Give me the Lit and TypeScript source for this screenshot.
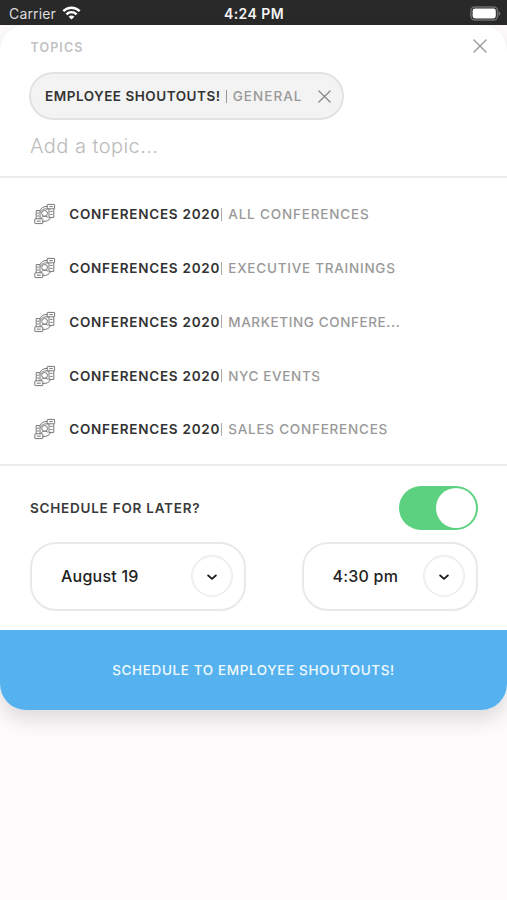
import { LitElement, html, css, svg } from "lit";
import { customElement, property } from "lit/decorators.js";

@customElement("close-icon")
class CloseIcon extends LitElement {
  static styles = css`
    :host { display: block; color: #999; }
    svg { display: block; width: 100%; height: 100%; }
  `;
  render() {
    return html`<svg viewBox="0 0 14 14" fill="none" stroke="currentColor" stroke-width="1.4" stroke-linecap="round"><path d="M1 1L13 13M13 1L1 13" /></svg>`;
  }
}

@customElement("status-bar")
class StatusBar extends LitElement {
  static styles = css`
    :host {
      display: grid; grid-template-columns: 1fr auto 1fr; align-items: center;
      box-sizing: border-box; height: 25px; padding: 2px 6px 0 9px;
      background: #292929; font-size: 14px; line-height: 22px;
    }
    .left { display: flex; align-items: center; gap: 6px; }
    .carrier { letter-spacing: 0.15px; color: #ddd; }
    .time { font-weight: 600; letter-spacing: 0.45px; color: #f4f4f4; margin-right: 2px; }
    .wifi { margin-top: -2px; }
    .battery { justify-self: end; margin-top: -1px; }
    svg { display: block; }
  `;
  render() {
    return html`
      <div class="left">
        <span class="carrier">Carrier</span>
        <svg class="wifi" width="19" height="14" viewBox="0 0 19 14" fill="none" stroke="#fff" stroke-width="2.4">
          <path d="M1.3 5.2C6 0.6 13 0.6 17.7 5.2" />
          <path d="M4.4 8.4C7.4 5.6 11.6 5.6 14.6 8.4" />
          <path d="M9.5 13.6L6.6 10.7C8.3 9.2 10.7 9.2 12.4 10.7Z" fill="#fff" stroke="none" />
        </svg>
      </div>
      <span class="time">4:24 PM</span>
      <svg class="battery" width="31" height="15" viewBox="0 0 31 15">
        <rect x="0.9" y="0.9" width="26.6" height="13.2" rx="4" fill="none" stroke="#6e6e6e" stroke-width="1.5" />
        <rect x="2.6" y="2.6" width="23.2" height="9.8" rx="2.4" fill="#fff" />
        <path d="M28.6 5.2C30.8 6 30.8 9 28.6 9.8Z" fill="#777" />
      </svg>
    `;
  }
}

const conferenceIcon = svg`
  <rect x="13.2" y="1.4" width="7.4" height="4.4" rx="0.5" />
  <path d="M15 5.8V14.4H19.8V5.8M16.2 8.4H18.6M16.2 11.4H18.6M15.4 3.6H18.8" />
  <rect x="0.8" y="15.8" width="8" height="4.8" rx="0.5" />
  <path d="M2.2 15.8V7.6H6V15.8M3.2 10.2H5M3.2 13H5M2.8 18.2H6.8" />
  <circle cx="10.6" cy="10.4" r="2.9" />
  <path d="M7 15.4C7.4 13.8 8.8 13.3 10.6 13.3S13.6 13.8 14.4 14.8" />
  <path d="M6 7.6C7.2 4.8 9.8 3.2 13.2 3.4M6.2 9.6C7.8 6.4 10.8 5.2 14.4 6.2M8.8 18.4C12.4 18.8 15.4 17.4 16.8 14.4" />
`;

@customElement("topic-row")
class TopicRow extends LitElement {
  @property() topic = "";
  @property() channel = "";
  @property({ type: Number }) tracking = 1;
  static styles = css`
    :host { display: flex; align-items: center; height: 53.75px; padding-left: 34px; font-size: 13.5px; white-space: pre; }
    svg { width: 22px; height: 22px; margin-right: 13.3px; flex: none; }
    .topic { color: #333; font-weight: 600; letter-spacing: 0.75px; }
    .bar { width: 1px; height: 13px; background: #aaa; margin: 0 6.5px 0 0.6px; }
    .channel { color: #999; font-weight: 500; }
  `;
  render() {
    return html`
      <svg viewBox="0 0 22 22" fill="none" stroke="#757575" stroke-width="1">${conferenceIcon}</svg>
      <span class="topic">${this.topic}</span><span class="bar"></span><span class="channel" style="letter-spacing:${this.tracking}px">${this.channel}</span>
    `;
  }
}

@customElement("picker-field")
class PickerField extends LitElement {
  @property() value = "";
  static styles = css`
    :host {
      display: flex; align-items: center; justify-content: space-between; box-sizing: border-box;
      height: 69px; padding: 0 11px 0 29px; border: 2px solid #e9e9e9; border-radius: 26px;
      font-size: 16px; font-weight: 500; color: #222; letter-spacing: 0.22px;
    }
    .value { margin-top: -2px; }
    .knob {
      display: grid; place-items: center; box-sizing: border-box; width: 42px; height: 42px; margin-top: -1px;
      border: 2px solid #efefef; border-radius: 50%;
    }
    svg { margin-top: 2px; }
  `;
  render() {
    return html`<span class="value">${this.value}</span>
      <span class="knob"><svg width="10" height="7" viewBox="0 0 10 7" fill="none" stroke="#222" stroke-width="1.9" stroke-linecap="round" stroke-linejoin="round"><path d="M1.2 1.5L5 4.9L8.8 1.5" /></svg></span>`;
  }
}

@customElement("app-root")
class AppRoot extends LitElement {
  static styles = css`
    :host { display: flex; flex-direction: column; height: 900px; overflow: hidden; background: #fdfbfc; font-family: Inter, "Liberation Sans", sans-serif; }
    .card { background: #fff; border-radius: 26px; overflow: hidden; box-shadow: 0 10px 20px rgba(50, 40, 45, 0.15); }
    .header { display: flex; justify-content: space-between; align-items: center; height: 43px; padding: 0 20px 0 30.5px; }
    .label { font-size: 12.5px; font-weight: 600; letter-spacing: 1.1px; color: #c2c2c2; margin-top: 1px; }
    .header close-icon { width: 14px; height: 14px; margin-bottom: 2px; }
    .chip {
      display: flex; align-items: center; box-sizing: border-box; width: 315px; height: 48px; margin: 4px 0 0 29px; padding-left: 14px;
      border: 2px solid #e2e2e2; border-radius: 24px; background: #f3f3f3; font-size: 13.5px;
    }
    .name { font-weight: 600; color: #333; letter-spacing: 0.52px; }
    .bar { width: 1px; height: 13px; background: #999; margin: 0 5.5px; }
    .sub { color: #999; font-weight: 500; letter-spacing: 1.05px; }
    .chip close-icon { width: 13px; height: 13px; margin-left: 15px; color: #888; }
    .placeholder { height: 56px; box-sizing: border-box; padding: 14px 0 0 30px; font-size: 20px; line-height: 24px; font-weight: 300; color: #bbb; letter-spacing: 0.45px; }
    .list { padding: 9.5px 0 7.75px; border-top: 2px solid #ebebeb; border-bottom: 2px solid #ebebeb; }
    .later { display: flex; justify-content: space-between; align-items: center; padding: 20px 29.5px 12px 30px; }
    .question { font-size: 13.5px; font-weight: 600; color: #3a3a3a; letter-spacing: 0.76px; }
    .switch { display: flex; justify-content: flex-end; align-items: center; box-sizing: border-box; width: 78.5px; height: 44px; padding-right: 2px; border-radius: 22px; background: #5cd281; }
    .thumb { width: 40px; height: 40px; border-radius: 50%; background: #fff; }
    .pickers { display: flex; justify-content: space-between; padding: 0 29px 19px 30px; }
    .date { width: 215.5px; }
    .hour { width: 176.5px; }
    .submit { display: grid; place-items: center; height: 79.5px; background: #56b2ef; color: #f0faff; font-size: 13.5px; font-weight: 500; letter-spacing: 0.62px; }
  `;
  render() {
    const rows = [
      { channel: "ALL CONFERENCES", tracking: 0.83 },
      { channel: "EXECUTIVE TRAININGS", tracking: 0.75 },
      { channel: "MARKETING CONFERE...", tracking: 0.6 },
      { channel: "NYC EVENTS", tracking: 0.62 },
      { channel: "SALES CONFERENCES", tracking: 0.77 },
    ];
    return html`
      <status-bar></status-bar>
      <div class="card">
        <div class="header"><span class="label">TOPICS</span><close-icon></close-icon></div>
        <div class="chip"><span class="name">EMPLOYEE SHOUTOUTS!</span><span class="bar"></span><span class="sub">GENERAL</span><close-icon></close-icon></div>
        <div class="placeholder">Add a topic...</div>
        <div class="list">${rows.map((r) => html`<topic-row topic="CONFERENCES 2020" channel=${r.channel} tracking=${r.tracking}></topic-row>`)}</div>
        <div class="later"><span class="question">SCHEDULE FOR LATER?</span><span class="switch"><span class="thumb"></span></span></div>
        <div class="pickers"><picker-field class="date" value="August 19"></picker-field><picker-field class="hour" value="4:30 pm"></picker-field></div>
        <div class="submit">SCHEDULE TO EMPLOYEE SHOUTOUTS!</div>
      </div>
    `;
  }
}
